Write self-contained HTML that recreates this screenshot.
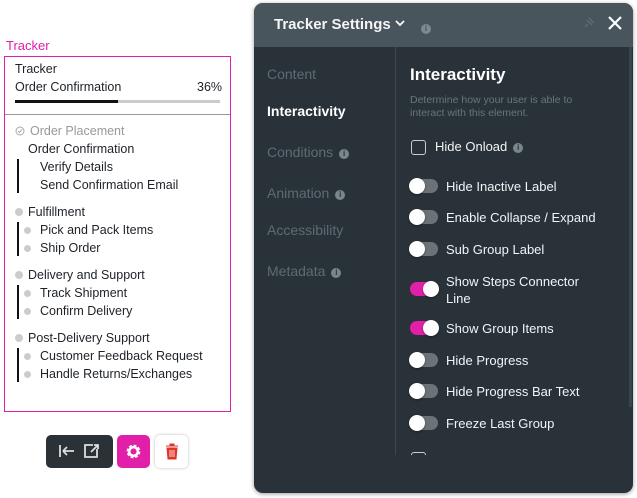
<!DOCTYPE html>
<html><head><meta charset="utf-8"><style>
*{margin:0;padding:0;box-sizing:border-box}
body{width:637px;height:498px;background:#fff;font-family:"Liberation Sans",sans-serif;position:relative;overflow:hidden;color:#222}
.a{position:absolute;white-space:nowrap}
.t{font-size:12.5px;color:#1d2228}
.dot{position:absolute;width:8px;height:8px;border-radius:50%;background:#ccc}
.vl{position:absolute;width:2px;background:#111}
.panel{position:absolute;left:254px;top:3px;width:379px;height:490px;background:#283238;border-radius:9px;overflow:hidden;box-shadow:0 1px 4px rgba(0,0,0,.4)}
.hdr{position:absolute;left:0;top:0;width:100%;height:44px;background:#48555c}
.nav{font-size:14px;color:#5f6b72}
.lbl{font-size:13px;color:#f2f4f5}
.tg{position:absolute;left:156px;width:28px;height:14px;border-radius:7px;background:#6b7278}
.tg.on{background:#e21fa8}
.tg::after{content:"";position:absolute;top:-1px;left:-1px;width:16px;height:16px;border-radius:50%;background:#fff;box-shadow:0 1px 2px rgba(0,0,0,.4)}
.tg.on::after{left:13px}
.info{display:inline-block;width:10px;height:10px;border-radius:50%;background:#7b868c;color:#283238;font-size:8px;text-align:center;line-height:10px;font-weight:bold;vertical-align:1px;margin-left:6px}
</style></head><body>
<div class="a" style="left:6px;top:38px;font-size:13px;color:#e21fa8">Tracker</div>
<div class="a" style="left:4px;top:56px;width:227px;height:356px;border:1px solid #e21fa8"></div>
<div class="a t" style="left:15px;top:62px">Tracker</div>
<div class="a t" style="left:15px;top:80px">Order Confirmation</div>
<div class="a t" style="left:197px;top:80px">36%</div>
<div class="a" style="left:15px;top:100px;width:205px;height:3px;background:#ccc"></div>
<div class="a" style="left:15px;top:100px;width:103px;height:3px;background:#111"></div>
<div class="a" style="left:5px;top:114px;width:225px;height:1px;background:#999"></div>
<svg class="a" style="left:15px;top:126px" width="10" height="10"><circle cx="5" cy="5" r="4" fill="none" stroke="#aaa"/><path d="M3 5l1.5 1.5L7 3.5" stroke="#aaa" fill="none"/></svg>
<div class="a t" style="left:30px;top:124px;color:#999">Order Placement</div>
<div class="a t" style="left:28px;top:142px">Order Confirmation</div>
<div class="vl" style="left:17px;top:159px;height:34px"></div>
<div class="a t" style="left:40px;top:160px">Verify Details</div>
<div class="a t" style="left:40px;top:178px">Send Confirmation Email</div>
<div class="dot" style="left:15px;top:208px"></div>
<div class="a t" style="left:28px;top:205px">Fulfillment</div>
<div class="vl" style="left:17px;top:222px;height:34px"></div>
<div class="dot" style="left:24px;top:227px;width:7px;height:7px"></div>
<div class="a t" style="left:40px;top:223px">Pick and Pack Items</div>
<div class="dot" style="left:24px;top:245px;width:7px;height:7px"></div>
<div class="a t" style="left:40px;top:241px">Ship Order</div>
<div class="dot" style="left:15px;top:271px"></div>
<div class="a t" style="left:28px;top:268px">Delivery and Support</div>
<div class="vl" style="left:17px;top:285px;height:34px"></div>
<div class="dot" style="left:24px;top:290px;width:7px;height:7px"></div>
<div class="a t" style="left:40px;top:286px">Track Shipment</div>
<div class="dot" style="left:24px;top:308px;width:7px;height:7px"></div>
<div class="a t" style="left:40px;top:304px">Confirm Delivery</div>
<div class="dot" style="left:15px;top:334px"></div>
<div class="a t" style="left:28px;top:331px">Post-Delivery Support</div>
<div class="vl" style="left:17px;top:348px;height:34px"></div>
<div class="dot" style="left:24px;top:353px;width:7px;height:7px"></div>
<div class="a t" style="left:40px;top:349px">Customer Feedback Request</div>
<div class="dot" style="left:24px;top:371px;width:7px;height:7px"></div>
<div class="a t" style="left:40px;top:367px">Handle Returns/Exchanges</div>

<div class="a" style="left:46px;top:435px;width:67px;height:33px;background:#2a3238;border-radius:5px"></div>
<svg class="a" style="left:58px;top:443px" width="48" height="16" viewBox="0 0 48 16"><path d="M2 2v12M5 8h11M5 8l4-4M5 8l4 4" stroke="#ddd" stroke-width="1.8" fill="none"/><path d="M35 2h-8v12h12v-8M33 9l7-7M36 2h4v4" stroke="#ddd" stroke-width="1.8" fill="none"/></svg>
<div class="a" style="left:117px;top:435px;width:33px;height:33px;background:#e21fa8;border-radius:5px"></div>
<svg class="a" style="left:124px;top:442px" width="19" height="19" viewBox="0 0 20 20"><circle cx="10" cy="10" r="5.5" fill="none" stroke="#fff" stroke-width="3.5" stroke-dasharray="2.7 1.6"/><circle cx="10" cy="10" r="4.5" fill="none" stroke="#fff" stroke-width="2.5"/></svg>
<div class="a" style="left:155px;top:435px;width:33px;height:33px;background:#fff;border-radius:5px;box-shadow:0 0 3px rgba(0,0,0,.25)"></div>
<svg class="a" style="left:165px;top:443px" width="14" height="17" viewBox="0 0 14 17"><path d="M1 3h12M5 3V1h4v2M2 5h10l-1 11H3z" fill="#e0352b" stroke="#e0352b" stroke-width="1"/><path d="M5 7v7M7 7v7M9 7v7" stroke="#fff" stroke-width="0.8"/></svg>

<div class="panel">
 <div class="hdr"></div>
 <div class="a" style="left:20px;top:13px;font-size:15px;font-weight:bold;color:#f5f5f5">Tracker Settings</div>
 <svg class="a" style="left:141px;top:16px" width="10" height="8"><path d="M1 2l4 4 4-4" stroke="#fff" stroke-width="1.8" fill="none"/></svg>
 <div class="a" style="left:167px;top:16px"><span class="info" style="margin:0;background:#7d8a90;color:#48555c">i</span></div>
 <svg class="a" style="left:328px;top:13px" width="14" height="14"><path d="M3 11l3-3M5 4l5 5M7 2l5 5M6 5l3 3" stroke="#5e6a70" stroke-width="1.5" fill="none"/></svg>
 <svg class="a" style="left:353px;top:12px" width="16" height="16"><path d="M2 2l12 12M14 2L2 14" stroke="#fff" stroke-width="2.2"/></svg>
 <div class="a" style="left:141px;top:44px;width:1px;height:408px;background:#3d484e"></div>
 <div class="a nav" style="left:13px;top:63px">Content</div>
 <div class="a nav" style="left:13px;top:100px;color:#fff;font-weight:bold">Interactivity</div>
 <div class="a nav" style="left:13px;top:141px">Conditions<span class="info">i</span></div>
 <div class="a nav" style="left:13px;top:182px">Animation<span class="info">i</span></div>
 <div class="a nav" style="left:13px;top:219px">Accessibility</div>
 <div class="a nav" style="left:13px;top:260px">Metadata<span class="info">i</span></div>
 <div class="a" style="left:156px;top:62px;font-size:17px;font-weight:bold;color:#fff">Interactivity</div>
 <div class="a" style="left:156px;top:91px;font-size:10.5px;color:#69757b;line-height:13px;white-space:normal;width:185px">Determine how your user is able to interact with this element.</div>
 <div class="a" style="left:157px;top:137px;width:15px;height:15px;border:1.5px solid #ccc;border-radius:3px"></div>
 <div class="a lbl" style="left:181px;top:136px">Hide Onload<span class="info">i</span></div>
 <div class="tg" style="top:176px"></div><div class="a lbl" style="left:192px;top:176px">Hide Inactive Label</div>
 <div class="tg" style="top:207px"></div><div class="a lbl" style="left:192px;top:207px">Enable Collapse / Expand</div>
 <div class="tg" style="top:239px"></div><div class="a lbl" style="left:192px;top:239px">Sub Group Label</div>
 <div class="tg on" style="top:279px"></div><div class="a lbl" style="left:192px;top:270px;line-height:17px">Show Steps Connector<br>Line</div>
 <div class="tg on" style="top:318px"></div><div class="a lbl" style="left:192px;top:318px">Show Group Items</div>
 <div class="tg" style="top:350px"></div><div class="a lbl" style="left:192px;top:350px">Hide Progress</div>
 <div class="tg" style="top:381px"></div><div class="a lbl" style="left:192px;top:381px">Hide Progress Bar Text</div>
 <div class="tg" style="top:413px"></div><div class="a lbl" style="left:192px;top:413px">Freeze Last Group</div>
 <div class="a" style="left:157px;top:449px;width:15px;height:3px;border:1.5px solid #ccc;border-bottom:none;border-radius:3px 3px 0 0"></div>
 <div class="a" style="left:375px;top:44px;width:3px;height:360px;background:#3a454b"></div>
</div>
</body></html>
